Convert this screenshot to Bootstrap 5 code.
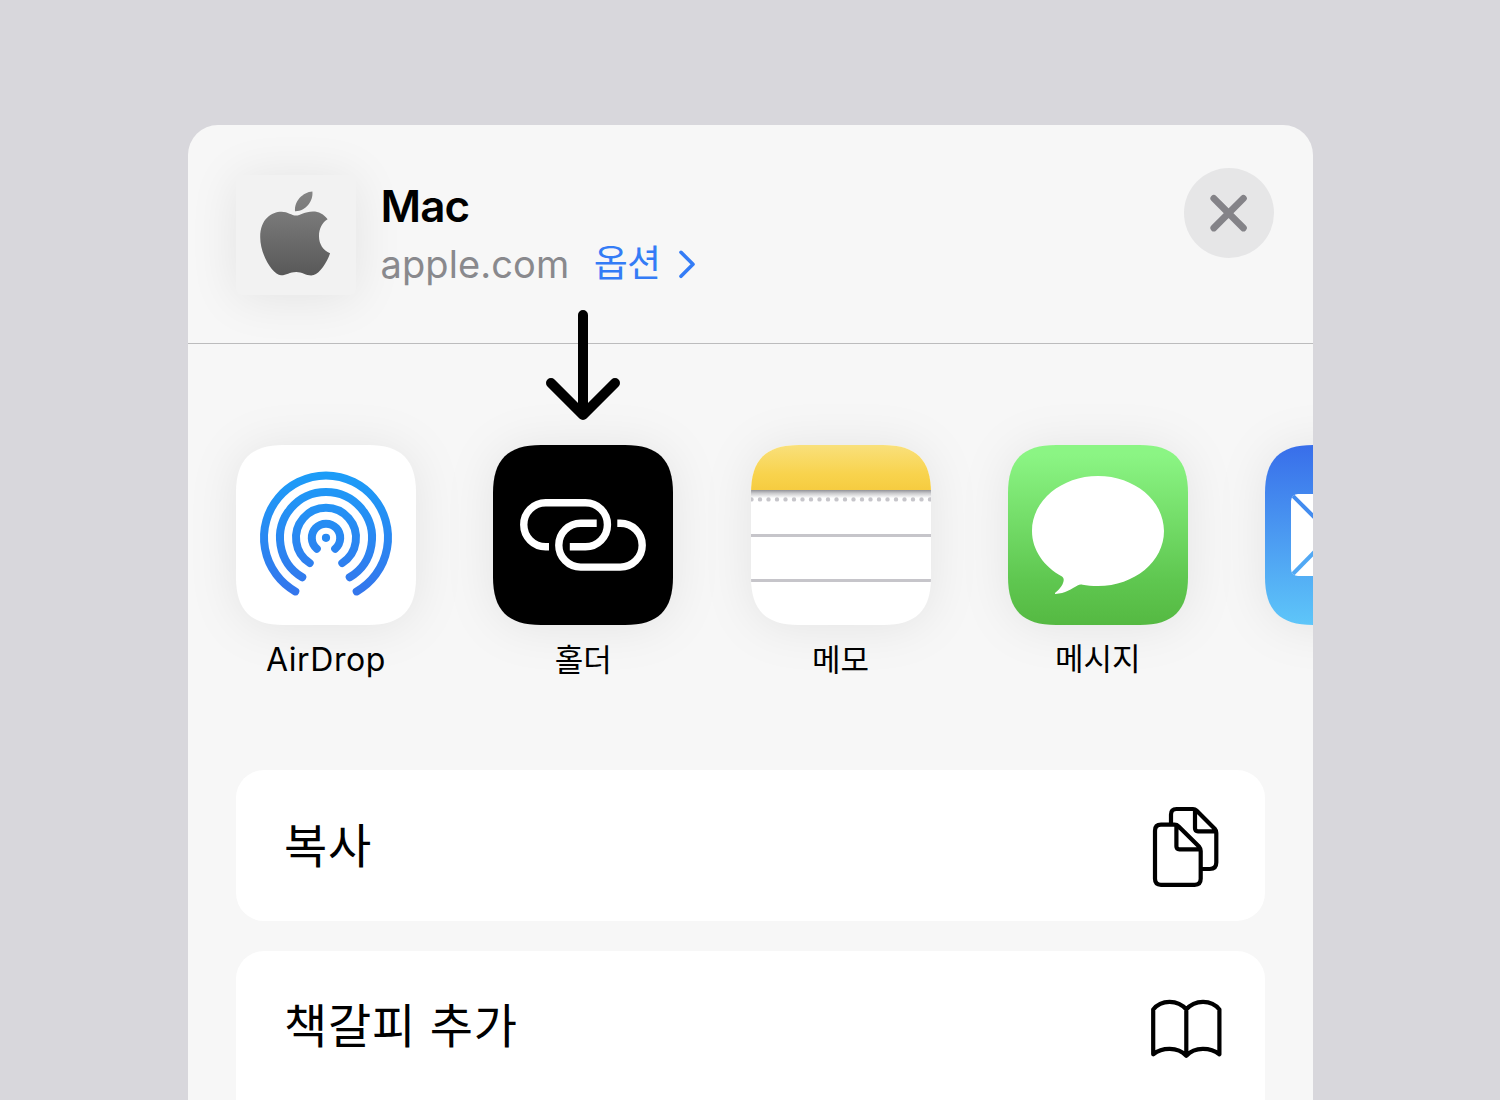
<!DOCTYPE html>
<html lang="ko">
<head>
<meta charset="utf-8">
<meta name="viewport" content="width=device-width, initial-scale=1">
<title>Mac</title>
<link href="https://cdn.jsdelivr.net/npm/bootstrap@5.3.0/dist/css/bootstrap.min.css" rel="stylesheet">
<style>
body{background:#d8d7dc;font-family:Inter,"Noto Sans CJK KR",sans-serif;height:1100px;overflow:hidden;padding:125px 0 0 188px;color:#000}
.sheet{width:1125px;height:975px;background:#f7f7f7;border-radius:30px 30px 0 0}
.sheet-head{height:219px;padding:43px 39px 0 48px;border-bottom:1px solid #bcbcbd}
.thumb{width:120px;height:120px;margin-top:7px;background:#f2f2f2;border-radius:6px;box-shadow:0 3px 50px rgba(0,0,0,.085)}
.page-info{padding:12px 0 0 24.5px}
.page-title{font-size:44px;line-height:52px;font-weight:600;letter-spacing:-.9px}
.page-sub{height:52px;margin-top:6px}
.domain{font-size:38px;line-height:52px;color:#89898d;letter-spacing:.1px}
.opts{font-size:37px;line-height:52px;color:#347cf6;margin-left:24.5px;letter-spacing:-1px}
.chevron{margin-left:15px}
.close-btn{width:90px;height:90px;background:#e6e6e7}
.apps{padding:101px 0 0 48px;gap:77.25px;height:426px}
.app-item{width:180px}
.app-icon{width:180px;height:180px;filter:drop-shadow(0 2px 24px rgba(0,0,0,.08))}
.app-label{font-size:32px;line-height:40px;margin-top:15px;white-space:nowrap;letter-spacing:.6px}
.ko-label{font-size:31px;letter-spacing:0}
.ko-label-up{margin-top:14px}
.actions{padding:0 48px;gap:30px}
.action-row{height:151px;border-radius:28px;padding:2px 43px 0 48px;font-size:47px;letter-spacing:.7px}
.action-open{height:180px;border-radius:28px 28px 0 0;padding-top:0;padding-bottom:30px}
.pointer{position:absolute;left:540px;top:305px}
</style>
</head>
<body>
<main class="sheet overflow-hidden">
  <header class="sheet-head d-flex align-items-start">
    <div class="thumb flex-shrink-0">
      <svg class="d-block" width="120" height="120" viewBox="236 175 120 120">
        <defs><linearGradient id="ap" x1="0" y1="191" x2="0" y2="276" gradientUnits="userSpaceOnUse"><stop stop-color="#858585"/><stop offset="1" stop-color="#585858"/></linearGradient></defs>
        <g fill="url(#ap)">
          <path d="M312.4 191.6C313.4 201.5 305.3 211.6 295 211.2C294 201.4 302.8 192.2 312.4 191.6Z"/>
          <path d="M296 215.6C300.2 215.6 304.6 211.5 313 211.5C318.5 211.5 324 214.1 327.6 219.3C322.3 222.4 318.9 228.8 319 236.4C319.1 244 323.1 250.2 330.1 253.2C327.4 261.3 320.2 273.3 313.6 275.1C307.6 276.6 302.7 271.9 296.2 271.9C289.6 271.9 286 275.5 281 275.3C273 275 260.2 255 260.2 237.2C260.2 219 271.6 211.8 281.5 211.8C288 211.8 291.5 215.6 296 215.6Z"/>
        </g>
      </svg>
    </div>
    <div class="page-info flex-grow-1">
      <div class="page-title">Mac</div>
      <div class="page-sub d-flex align-items-center">
        <span class="domain">apple.com</span>
        <span class="opts">옵션</span>
        <svg class="chevron" width="24" height="32" viewBox="0 0 24 32" fill="none" stroke="#347cf6" stroke-width="3.6" stroke-linecap="round" stroke-linejoin="round"><path d="M6 4.300L18 16.300L6 28.300"/></svg>
      </div>
    </div>
    <button class="close-btn btn rounded-circle border-0 p-0 d-flex align-items-center justify-content-center" aria-label="닫기">
      <svg width="50" height="50" viewBox="0 0 50 50" stroke="#848388" stroke-width="6.8" stroke-linecap="round"><path d="M9.8 10.4L39.4 40M39.4 10.4L9.8 40"/></svg>
    </button>
  </header>

  <section class="apps d-flex">
    <div class="app-item flex-shrink-0 text-center">
      <svg class="app-icon d-block" viewBox="0 0 180 180">
        <defs>
          <clipPath id="tileClip"><path d="M48 0H132C165.300 0 180 14.700 180 48V132C180 165.300 165.300 180 132 180H48C14.700 180 0 165.300 0 132V48C0 14.700 14.700 0 48 0Z"/></clipPath>
          <linearGradient id="air" x1="0" y1="27" x2="0" y2="151" gradientUnits="userSpaceOnUse"><stop stop-color="#1c9df8"/><stop offset="1" stop-color="#3475ec"/></linearGradient>
        </defs>
        <rect width="180" height="180" fill="#fff" clip-path="url(#tileClip)"/>
        <g fill="none" stroke="url(#air)" stroke-width="8" stroke-linecap="round">
          <path d="M59.3 146.400A62 62 0 1 1 120.700 146.400"/>
          <path d="M66.300 132.300A46 46 0 1 1 113.700 132.300"/>
          <path d="M73.700 118A30 30 0 1 1 106.300 118"/>
          <path d="M80.800 103.700A14.200 14.200 0 1 1 99.200 103.700"/>
        </g>
        <circle cx="90" cy="92.800" r="4.100" fill="#2789f3"/>
      </svg>
      <div class="app-label">AirDrop</div>
    </div>
    <div class="app-item flex-shrink-0 text-center">
      <svg class="app-icon d-block" viewBox="0 0 180 180">
        <rect width="180" height="180" fill="#000" clip-path="url(#tileClip)"/>
        <g fill="none" stroke="#fff" stroke-width="7.400">
          <path d="M56 101.700H52.700A21.950 21.950 0 0 1 52.700 57.800H92.500A21.950 21.950 0 0 1 92.500 101.700H76.800"/>
          <path d="M103.700 78.300H87.700A21.900 21.900 0 0 0 87.700 122.100H127.300A21.900 21.900 0 0 0 127.300 78.300H124.300"/>
        </g>
      </svg>
      <div class="app-label ko-label">홀더</div>
    </div>
    <div class="app-item flex-shrink-0 text-center">
      <svg class="app-icon d-block" viewBox="0 0 180 180">
        <defs>
          <linearGradient id="nt" x1="0" y1="0" x2="0" y2="1"><stop stop-color="#f9e07b"/><stop offset=".65" stop-color="#f8d34d"/><stop offset="1" stop-color="#f6cc40"/></linearGradient>
          <linearGradient id="ns" x1="0" y1="0" x2="0" y2="1"><stop stop-color="#929297"/><stop offset=".4" stop-color="#c9c9cc"/><stop offset="1" stop-color="#fff"/></linearGradient>
        </defs>
        <g clip-path="url(#tileClip)">
          <rect width="180" height="180" fill="#fff"/>
          <rect width="180" height="45" fill="url(#nt)"/>
          <rect y="45" width="180" height="8" fill="url(#ns)"/>
          <path d="M.5 54.400H182" stroke="#c6c5ca" stroke-width="4.400" stroke-linecap="round" stroke-dasharray="0 8.500"/>
          <path d="M0 90.500H180M0 135.500H180" stroke="#c6c5ca" stroke-width="3"/>
        </g>
      </svg>
      <div class="app-label ko-label">메모</div>
    </div>
    <div class="app-item flex-shrink-0 text-center">
      <svg class="app-icon d-block" viewBox="0 0 180 180">
        <defs><linearGradient id="ms" x1="0" y1="0" x2="0" y2="1"><stop offset=".05" stop-color="#8bf584"/><stop offset=".75" stop-color="#5fc750"/><stop offset="1" stop-color="#55b942"/></linearGradient></defs>
        <rect width="180" height="180" fill="url(#ms)" clip-path="url(#tileClip)"/>
        <path fill="#fff" d="M90 31C126.500 31 156 55.600 156 86C156 116.400 126.500 141 90 141C84 141 79 140.600 74.500 139.700C72.500 139.300 71 139.700 69.500 140.500C64 143.500 57 148.500 47.300 149C46.700 148.600 46.800 148 47.500 147.400C52.500 143.500 55.500 139 55.700 135C55.800 133.500 55.100 132.200 54 131.500C35.700 121.500 24 104.800 24 86C24 55.600 53.500 31 90 31Z"/>
      </svg>
      <div class="app-label ko-label ko-label-up">메시지</div>
    </div>
    <div class="app-item flex-shrink-0">
      <svg class="app-icon d-block" viewBox="0 0 180 180">
        <defs><linearGradient id="ml" x1="0" y1="0" x2="0" y2="1"><stop stop-color="#386eea"/><stop offset="1" stop-color="#5ec6f9"/></linearGradient>
        <clipPath id="env"><rect x="26" y="49" width="128" height="82" rx="7"/></clipPath></defs>
        <rect width="180" height="180" fill="url(#ml)" clip-path="url(#tileClip)"/>
        <rect x="26" y="49" width="128" height="82" rx="7" fill="#fff"/>
        <g clip-path="url(#env)" fill="none" stroke-width="4"><path stroke="#438cef" d="M24 47L80 103"/><path stroke="#51a8f4" d="M24 133L74 82"/></g>
      </svg>
    </div>
  </section>

  <section class="actions d-flex flex-column">
    <div class="action-row bg-white d-flex align-items-center justify-content-between">
      <span>복사</span>
      <svg width="72" height="88" viewBox="1150 803 72 88" fill="none" stroke="#000" stroke-width="4.200" stroke-linejoin="round">
        <path d="M1171 824V814.500Q1171 809 1176.500 809H1193Q1195 809 1196.500 810.500L1214.700 828.700Q1216.300 830.500 1216.300 833V862.500Q1216.300 869 1209.800 869H1201M1195 810V828.300Q1195 831.300 1198 831.300H1215"/>
        <path d="M1161 824.700H1174.500Q1177 824.700 1178.700 826.400L1199.200 846.800Q1200.700 848.500 1200.700 851V878.800Q1200.700 884.800 1194.700 884.800H1161Q1155 884.800 1155 878.800V830.700Q1155 824.700 1161 824.700ZM1176.400 825.500V846.300Q1176.400 849.300 1179.400 849.300H1200"/>
      </svg>
    </div>
    <div class="action-row action-open bg-white d-flex align-items-center justify-content-between">
      <span>책갈피 추가</span>
      <svg width="72" height="66" viewBox="1150 993 72 66" fill="none" stroke="#000" stroke-width="4.200" stroke-linejoin="round" stroke-linecap="round">
        <path d="M1186.300 1009.500C1178 999.200 1161 999.200 1153.200 1009.500V1054.300C1162 1047.200 1177.500 1046.300 1186.300 1055.700C1195 1046.300 1210.500 1047.200 1219.400 1054.300V1009.500C1211.600 999.200 1194.600 999.200 1186.300 1009.500ZM1186.300 1009.500V1055"/>
      </svg>
    </div>
  </section>
</main>
<svg class="pointer" width="86" height="120" viewBox="540 305 86 120" fill="none" stroke="#000" stroke-width="10" stroke-linecap="round" stroke-linejoin="round"><path d="M583 315V415M551 383L583 415L615 383"/></svg>
<script src="https://cdn.jsdelivr.net/npm/bootstrap@5.3.0/dist/js/bootstrap.bundle.min.js"></script>
</body>
</html>
